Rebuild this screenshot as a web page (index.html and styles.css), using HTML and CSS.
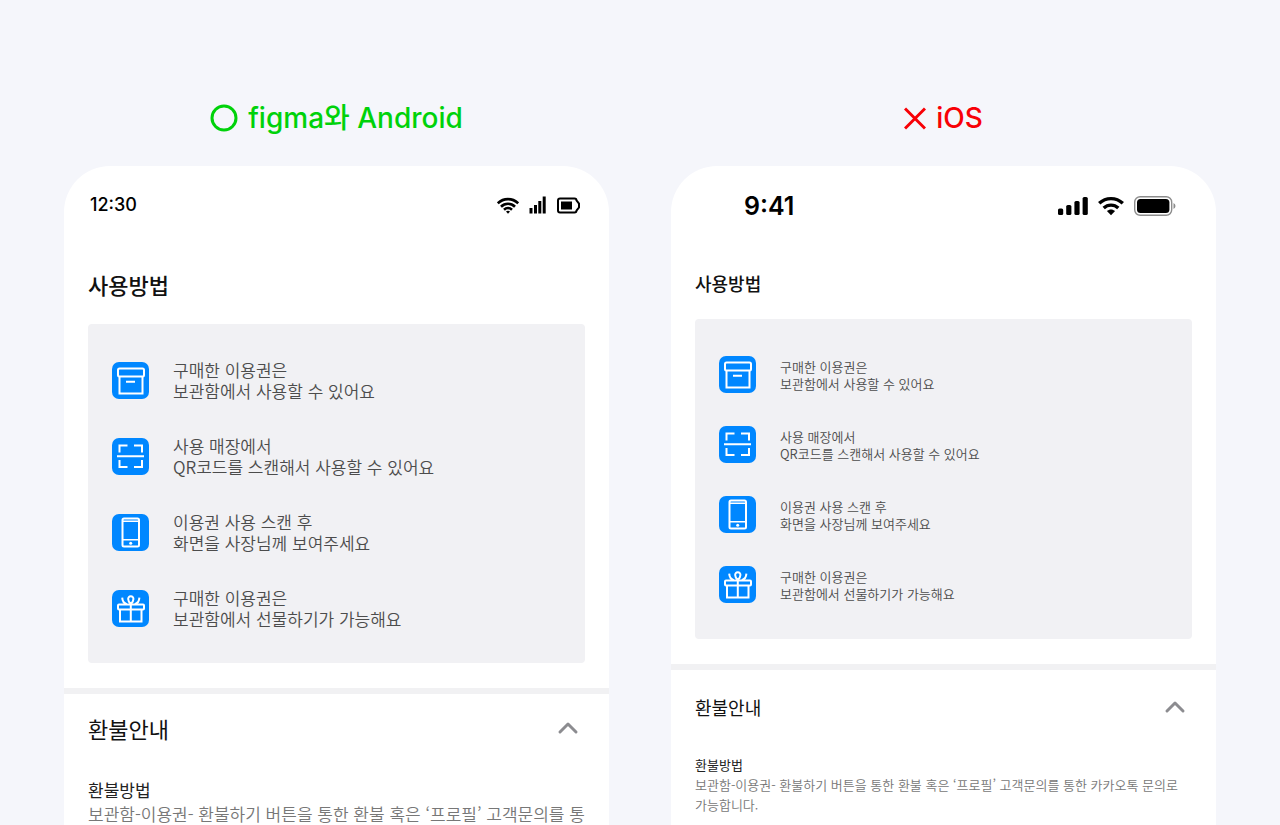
FILE: index.html
```html
<!DOCTYPE html>
<html lang="ko">

<head>
    <meta charset="UTF-8">
    <meta name="viewport" content="width=device-width, initial-scale=1.0">
    <title>사용방법</title>
    <link rel="stylesheet" href="styles.css">
</head>

<body>
    <!-- shared icons -->
    <svg class="sprite" aria-hidden="true">
        <symbol id="archive" viewBox="0 0 37 37">
            <rect width="37" height="37" rx="7" fill="#0087ff" stroke="none" />
            <path d="M7.5 15v16.5h23V15M14 19.7h9" />
            <rect x="6" y="6.5" width="26" height="8" rx="1.5" />
        </symbol>
        <symbol id="scan" viewBox="0 0 37 37">
            <rect width="37" height="37" rx="7" fill="#0087ff" stroke="none" />
            <path d="M7.5 14.5v-7h8M22 7.5h8v7M7.5 22v7h8M22 29h8v-7M5 18.3h27" />
        </symbol>
        <symbol id="mobile" viewBox="0 0 37 37">
            <rect width="37" height="37" rx="7" fill="#0087ff" stroke="none" />
            <rect x="10.5" y="4.5" width="16.5" height="28" rx="1.5" />
            <path d="M10.5 7.2H27M10.5 25.7H27" stroke-width="1.6" />
            <circle cx="18.7" cy="29.2" r="1.5" fill="#fff" stroke="none" />
        </symbol>
        <symbol id="gift" viewBox="0 0 37 37">
            <rect width="37" height="37" rx="7" fill="#0087ff" stroke="none" />
            <rect x="6" y="14.5" width="26" height="5" rx="1" />
            <path d="M8 19.5v12h21.5v-12M18.8 14.5v17" />
            <path d="M18.8 14.3c-3.4-3.4-3.6-8 0-8s3.4 4.6 0 8zM10.2 7.6c.2 3.5 1.6 5.6 4.6 6.5M27.4 7.6c-.2 3.5-1.6 5.6-4.6 6.5" />
        </symbol>
    </svg>

    <main class="compare">
        <section class="column android">
            <h2 class="label good">
                <svg width="28" height="28" viewBox="0 0 28 28"><circle cx="14" cy="14" r="12" /></svg>
                figma와 Android
            </h2>
            <div class="phone">
                <div class="status">
                    <span class="time">12:30</span>
                    <div class="status-icons">
                        <svg width="22" height="17" viewBox="0 0 22 17" fill="none" stroke="#000" stroke-width="2.6">
                            <path d="M.8 6.3c5.8-5.6 14.600-5.600 20.400 0M4 9.700c4-3.900 10-3.900 14 0M7 12.800c2.400-2.300 5.600-2.300 8 0" />
                            <path d="M9 14.600c1.200-1.100 2.800-1.100 4 0l-2 2.200z" fill="#000" stroke="none" />
                        </svg>
                        <svg width="18" height="18" viewBox="0 0 18 18">
                            <path d="M.5 12h3v5.500h-3zM5 9h3v8.500H5zM9.300 5h3v12.500h-3zM13.700.5h3v17h-3z" />
                        </svg>
                        <svg width="24" height="17" viewBox="0 0 24 17">
                            <path d="M3 1.500h14.500q2 0 2 2l2.500 3v4l-2.500 3q0 2-2 2H3q-2 0-2-2v-10q0-2 2-2z" fill="none" stroke="#000" stroke-width="2" />
                            <path d="M4 4.500h11v8H4z" />
                        </svg>
                    </div>
                </div>
                <section class="usage">
                    <h3 class="title">사용방법</h3>
                    <ul class="steps">
                        <li><svg class="icon"><use href="#archive" /></svg><p>구매한 이용권은<br>보관함에서 사용할 수 있어요</p></li>
                        <li><svg class="icon"><use href="#scan" /></svg><p>사용 매장에서<br>QR코드를 스캔해서 사용할 수 있어요</p></li>
                        <li><svg class="icon"><use href="#mobile" /></svg><p>이용권 사용 스캔 후<br>화면을 사장님께 보여주세요</p></li>
                        <li><svg class="icon"><use href="#gift" /></svg><p>구매한 이용권은<br>보관함에서 선물하기가 가능해요</p></li>
                    </ul>
                </section>
                <section class="refund">
                    <button class="toggle" type="button" aria-expanded="true">
                        환불안내
                        <svg width="34" height="24" viewBox="0 0 34 24"><path d="M9 16l8-8 8 8" /></svg>
                    </button>
                    <h4>환불방법</h4>
                    <p>보관함-이용권- 환불하기 버튼을 통한 환불 혹은 ‘프로필’ 고객문의를 통한 카카오톡 문의로 가능합니다.</p>
                </section>
            </div>
        </section>

        <section class="column ios">
            <h2 class="label bad">
                <svg width="22" height="28" viewBox="0 0 22 28"><path d="M1 4.500l20 20M21 4.500l-20 20" /></svg>
                iOS
            </h2>
            <div class="phone">
                <div class="status">
                    <span class="time">9:41</span>
                    <div class="status-icons">
                        <svg width="30" height="20" viewBox="0 0 30 20">
                            <rect y="12.500" width="5.200" height="6.500" rx="1.600" />
                            <rect x="8.200" y="9" width="5.200" height="10" rx="1.600" />
                            <rect x="16.400" y="5" width="5.200" height="14" rx="1.600" />
                            <rect x="24.600" y="1" width="5.200" height="18" rx="1.600" />
                        </svg>
                        <svg width="26" height="20" viewBox="0 0 26 20" fill="none" stroke="#000" stroke-width="3.400">
                            <path d="M1.200 7.300c6.700-6.300 16.900-6.300 23.600 0M5.700 12c4.200-3.900 10.400-3.900 14.600 0" />
                            <path d="M8.900 15c2.400-2.100 5.800-2.100 8.200 0L13 19.200z" fill="#000" stroke="none" />
                        </svg>
                        <svg width="42" height="20" viewBox="0 0 42 20">
                            <rect x=".7" y=".7" width="37" height="18.600" rx="5.500" fill="none" stroke="#8c8c8c" stroke-width="1.400" />
                            <rect x="3" y="3" width="32.400" height="14" rx="3.500" />
                            <path d="M39.500 7v6q2-1 2-3t-2-3z" fill="#8c8c8c" />
                        </svg>
                    </div>
                </div>
                <section class="usage">
                    <h3 class="title">사용방법</h3>
                    <ul class="steps">
                        <li><svg class="icon"><use href="#archive" /></svg><p>구매한 이용권은<br>보관함에서 사용할 수 있어요</p></li>
                        <li><svg class="icon"><use href="#scan" /></svg><p>사용 매장에서<br>QR코드를 스캔해서 사용할 수 있어요</p></li>
                        <li><svg class="icon"><use href="#mobile" /></svg><p>이용권 사용 스캔 후<br>화면을 사장님께 보여주세요</p></li>
                        <li><svg class="icon"><use href="#gift" /></svg><p>구매한 이용권은<br>보관함에서 선물하기가 가능해요</p></li>
                    </ul>
                </section>
                <section class="refund">
                    <button class="toggle" type="button" aria-expanded="true">
                        환불안내
                        <svg width="34" height="24" viewBox="0 0 34 24"><path d="M9 16l8-8 8 8" /></svg>
                    </button>
                    <h4>환불방법</h4>
                    <p>보관함-이용권- 환불하기 버튼을 통한 환불 혹은 ‘프로필’ 고객문의를 통한 카카오톡 문의로 가능합니다.</p>
                </section>
            </div>
        </section>
    </main>
</body>

</html>
```
FILE: styles.css
```css
* {
    box-sizing: border-box;
    margin: 0;
    padding: 0;
}

body {
    height: 100vh;
    overflow: hidden;
    background: #f5f6fb;
    color: #111;
    font-family: "Noto Sans CJK KR", sans-serif;
}

.sprite {
    display: none;
}

.compare {
    display: grid;
    grid-template-columns: 1fr 1fr;
    gap: 62px;
    height: 100%;
    padding: 100px 64px 0;
}

.column {
    display: flex;
    flex-direction: column;
    min-width: 0;
}

.label {
    display: flex;
    align-items: center;
    justify-content: center;
    gap: 10px;
    margin-bottom: 30px;
    font: 500 28px/36px Inter, "Noto Sans CJK KR", sans-serif;
}

.label svg {
    fill: none;
    stroke: currentColor;
    stroke-width: 3;
}

.good {
    color: #00d20a;
}

.bad {
    color: #f80006;
}

.phone {
    flex: 1;
    background: #fff;
    border-radius: 46px 46px 0 0;
}

.status {
    display: flex;
    align-items: center;
    justify-content: space-between;
    height: 78px;
    padding: 0 28px 0 26px;
    color: #000;
}

.status-icons {
    display: flex;
    align-items: center;
    gap: 10px;
}

.time {
    font: 500 18px/24px Inter, sans-serif;
}

.usage {
    padding: 24px 24px 25px;
    border-bottom: 6px solid #f1f1f3;
}

.title {
    margin-bottom: 24px;
    font-size: 22px;
    line-height: 32px;
    font-weight: 500;
}

.steps {
    display: flex;
    flex-direction: column;
    gap: 34px;
    padding: 35px 24px 34px;
    background: #f1f1f4;
    border-radius: 4px;
    list-style: none;
}

.steps li {
    display: flex;
    align-items: center;
    gap: 24px;
}

.steps p {
    color: #4c4c4c;
    font-size: 17px;
    font-weight: 350;
    line-height: 21px;
}

.icon {
    width: 37px;
    height: 37px;
    fill: none;
    stroke: #fff;
    stroke-width: 2;
}

.refund {
    padding: 18px 24px 0;
}

.toggle {
    display: flex;
    align-items: center;
    justify-content: space-between;
    width: 100%;
    margin-bottom: 34px;
    border: 0;
    background: none;
    color: #111;
    font: 400 22px/32px "Noto Sans CJK KR", sans-serif;
}

.toggle svg {
    fill: none;
    stroke: #8c8c90;
    stroke-width: 3;
    stroke-linecap: round;
    stroke-linejoin: round;
}

.refund h4 {
    color: #222;
    font-size: 17px;
    font-weight: 400;
    line-height: 24px;
}

.refund p {
    color: #777;
    font-size: 17px;
    font-weight: 350;
    line-height: 24px;
}

.ios .status {
    padding: 2px 40px 0 73px;
}

.ios .time {
    font-size: 25px;
    font-weight: 600;
}

.ios .usage {
    padding-top: 25px;
}

.ios .title,
.ios .toggle {
    font-size: 18px;
    line-height: 28px;
}

.ios .title {
    margin-bottom: 22px;
}

.ios .steps {
    gap: 33px;
    padding: 37px 24px 36px;
}

.ios .steps p {
    font-size: 13px;
    line-height: 17px;
}

.ios .refund {
    padding-top: 23px;
}

.ios .refund h4,
.ios .refund p {
    font-size: 13px;
    line-height: 20px;
    word-break: keep-all;
}
```
